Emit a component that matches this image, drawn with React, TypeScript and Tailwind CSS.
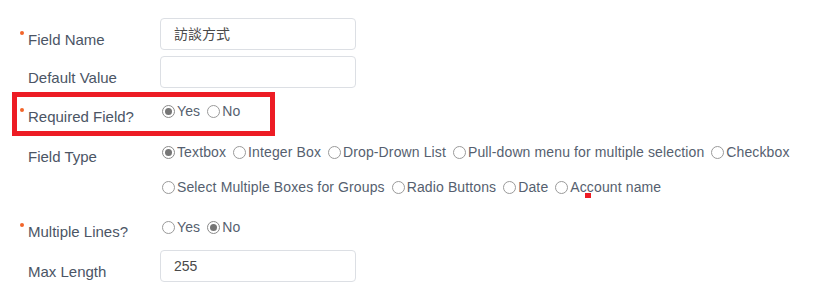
import React from "react";

const Dot = () => (
  <span className="mt-[1px] ml-[20px] mr-[4px] h-[4px] w-[4px] shrink-0 self-start rounded-full bg-[#f2652a]" />
);

function Label({ text, req, mt }: { text: string; req?: boolean; mt: string }) {
  return (
    <div className={`flex w-[162px] shrink-0 ${mt}`}>
      {req ? <Dot /> : <span className="w-[28px] shrink-0" />}
      <span className="text-[15px] leading-[20px] text-[#4b5565]">{text}</span>
    </div>
  );
}

function Radio({ label, checked }: { label: string; checked?: boolean }) {
  return (
    <span className="flex items-center">
      <span
        className={`flex h-[13px] w-[13px] items-center justify-center rounded-full border bg-white ${
          checked ? "border-[#8a8a8a]" : "border-[#9a9a9a]"
        }`}
      >
        {checked && <span className="h-[7px] w-[7px] rounded-full bg-[#767676]" />}
      </span>
      <span className="ml-[2px] text-[14px] leading-[20px] tracking-[0.12px] text-[#565f6f]">{label}</span>
    </span>
  );
}

function Input({ value }: { value: string }) {
  return (
    <div className="flex h-[32px] w-[196px] items-center rounded-[4px] border border-[#dcdfe4] bg-white pl-[13px] text-[14px] text-[#4a4a4a]" style={{ fontFamily: '"Liberation Sans", "Noto Sans CJK TC", Arial, sans-serif' }}>
      {value}
    </div>
  );
}

export default function App() {
  return (
    <div
      className="relative h-[303px] w-[827px] overflow-hidden bg-white pt-[18px]"
      style={{ fontFamily: '"Liberation Sans", Arial, "Noto Sans CJK TC", sans-serif' }}
    >
      {/* Field Name */}
      <div className="flex h-[32px]">
        <Label text="Field Name" req mt="mt-[12px]" />
        <div className="-ml-[2px]">
          <Input value="訪談方式" />
        </div>
      </div>
      {/* Default Value */}
      <div className="mt-[6px] flex h-[32px]">
        <Label text="Default Value" mt="mt-[12px]" />
        <div className="-ml-[2px]">
          <Input value="" />
        </div>
      </div>
      {/* Required Field */}
      <div className="relative mt-[13px] flex h-[26px]">
        <Label text="Required Field?" req mt="mt-[6px]" />
        <div className="flex h-[20px] items-center gap-[7px]">
          <Radio label="Yes" checked />
          <Radio label="No" />
        </div>
        <div className="absolute left-[12px] top-[-9px] h-[44px] w-[263px] border-[5px] border-[#ed1c24]" />
      </div>
      {/* Field Type */}
      <div className="mt-[15px] flex">
        <Label text="Field Type" mt="mt-[5px]" />
        <div className="flex flex-col gap-[15px]">
          <div className="flex h-[20px] items-center gap-[7px]">
            <Radio label="Textbox" checked />
            <Radio label="Integer Box" />
            <Radio label="Drop-Drown List" />
            <Radio label="Pull-down menu for multiple selection" />
            <Radio label="Checkbox" />
          </div>
          <div className="flex h-[20px] items-center gap-[7px]">
            <Radio label="Select Multiple Boxes for Groups" />
            <Radio label="Radio Buttons" />
            <Radio label="Date" />
            <Radio label="Account name" />
          </div>
        </div>
      </div>
      {/* Multiple Lines */}
      <div className="mt-[20px] flex">
        <Label text="Multiple Lines?" req mt="mt-[5px]" />
        <div className="flex h-[20px] items-center gap-[7px]">
          <Radio label="Yes" />
          <Radio label="No" checked />
        </div>
      </div>
      {/* Max Length */}
      <div className="mt-[8px] flex h-[32px]">
        <Label text="Max Length" mt="mt-[12px]" />
        <div className="-ml-[2px]">
          <Input value="255" />
        </div>
      </div>
      <div className="absolute left-[585px] top-[193px] h-[5px] w-[6px] bg-[#ed1c24]" />
    </div>
  );
}
